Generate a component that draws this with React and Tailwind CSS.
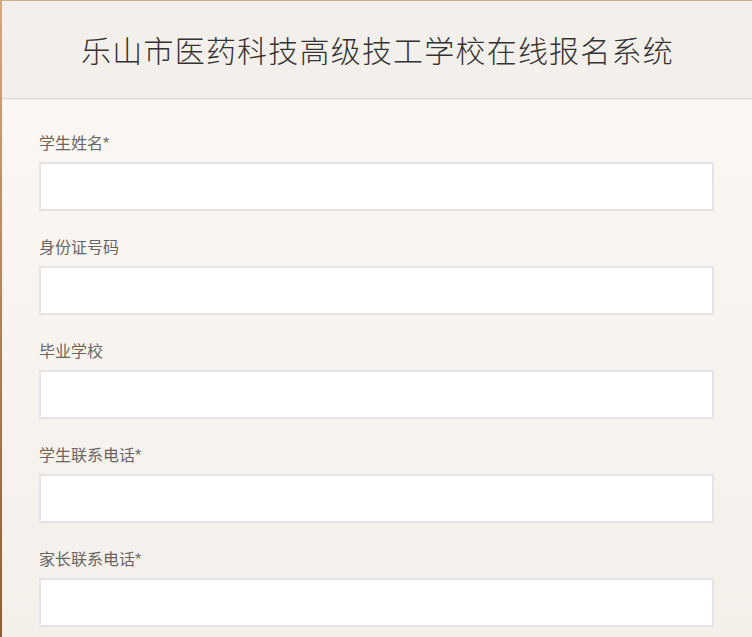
import React from 'react';

const fields = [
  { label: '学生姓名', required: true },
  { label: '身份证号码' },
  { label: '毕业学校' },
  { label: '学生联系电话', required: true },
  { label: '家长联系电话', required: true },
];

const Field = ({ label, required }) => (
  <div className="mb-[25px]">
    <label className="block h-6 text-[16px] leading-6 text-[#666]">
      {label}
      {required ? '*' : ''}
    </label>
    <input
      type="text"
      className="mt-[6px] block h-[49px] w-full border-2 border-[#e4e4e4] bg-white px-3 text-[16px] outline-none"
    />
  </div>
);

export default function App() {
  return (
    <div
      className="flex min-h-screen border-t border-[#d2ab88] bg-gradient-to-b from-[#fcf8f3] to-[#f4efe9]"
      style={{ fontFamily: '"Liberation Sans", "Noto Sans CJK SC", sans-serif' }}
    >
      <div className="w-[2px] shrink-0 bg-gradient-to-b from-[#d4a880] to-[#8f5b33]" />
      <div className="flex-1">
        <div className="flex h-[98px] items-center justify-center border-b border-[#dcd8d3] bg-[#f3f0ec] shadow-[0_1px_0_#efebe6]">
          <h1 className="pl-px text-[30px] font-light tracking-[1.2px] text-[#333]" style={{ fontFamily: '"Noto Sans CJK SC", sans-serif' }}>
            乐山市医药科技高级技工学校在线报名系统
          </h1>
        </div>
        <form className="pl-[37px] pr-[38px] pt-[33px]">
          {fields.map((f) => (
            <Field key={f.label} label={f.label} required={f.required} />
          ))}
        </form>
      </div>
    </div>
  );
}
